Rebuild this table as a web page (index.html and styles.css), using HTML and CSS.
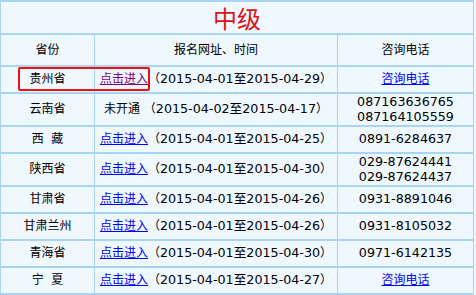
FILE: index.html
```html
<!DOCTYPE html>
<html lang="zh-CN">
<head>
<meta charset="utf-8">
<title>中级</title>
<link rel="stylesheet" href="styles.css">
</head>
<body>
<div class="wrap">
<table class="tbl">
  <colgroup><col class="k1"><col class="k2"><col class="k3"></colgroup>
  <tr class="r-title"><td colspan="3" class="title">中级</td></tr>
  <tr class="r-head"><td>省份</td><td>报名网址、时间</td><td>咨询电话</td></tr>
  <tr class="r1"><td>贵州省</td><td><a class="lk visited">点击进入</a>（<span class="d">2015-04-01至2015-04-29</span>）</td><td><a class="lk">咨询电话</a></td></tr>
  <tr class="r2"><td>云南省</td><td>未开通 （<span class="d">2015-04-02至2015-04-17</span>）</td><td><span class="d">087163636765<br>087164105559</span></td></tr>
  <tr class="r1"><td>西&nbsp;&nbsp;藏</td><td><a class="lk">点击进入</a>（<span class="d">2015-04-01至2015-04-25</span>）</td><td><span class="d">0891-6284637</span></td></tr>
  <tr class="r2"><td>陕西省</td><td><a class="lk">点击进入</a>（<span class="d">2015-04-01至2015-04-30</span>）</td><td><span class="d">029-87624441<br>029-87624437</span></td></tr>
  <tr class="r1"><td>甘肃省</td><td><a class="lk">点击进入</a>（<span class="d">2015-04-01至2015-04-26</span>）</td><td><span class="d">0931-8891046</span></td></tr>
  <tr class="r1"><td>甘肃兰州</td><td><a class="lk">点击进入</a>（<span class="d">2015-04-01至2015-04-26</span>）</td><td><span class="d">0931-8105032</span></td></tr>
  <tr class="r1"><td>青海省</td><td><a class="lk">点击进入</a>（<span class="d">2015-04-01至2015-04-30</span>）</td><td><span class="d">0971-6142135</span></td></tr>
  <tr class="r1"><td>宁&nbsp;&nbsp;夏</td><td><a class="lk">点击进入</a>（<span class="d">2015-04-01至2015-04-27</span>）</td><td><a class="lk">咨询电话</a></td></tr>
</table>
<div class="mark"></div>
</div>
</body>
</html>
```
FILE: styles.css
```css
html, body {
  margin: 0;
  padding: 0;
  background: #eff8ff;
}
body {
  font-family: "DejaVu Sans", "Noto Sans CJK SC", sans-serif;
  font-size: 12px;
  color: #000;
}
.wrap {
  position: relative;
  width: 476px;
  height: 295px;
  overflow: hidden;
}
.tbl {
  border-collapse: separate;
  border-spacing: 0;
  width: 474px;
  table-layout: fixed;
  border-top: 2px solid #a9d4f3;
  border-left: 1px solid #a9d4f3;
  background: #eff8ff;
}
.k1 { width: 94px; }
.k2 { width: 243px; }
.k3 { width: 136px; }
.tbl td {
  padding: 0;
  border-right: 1px solid #a9d4f3;
  border-bottom: 2px solid #a9d4f3;
  text-align: center;
  vertical-align: middle;
  line-height: 14.5px;
  white-space: nowrap;
}
.r-title td { height: 31px; }
.r-head td { height: 30px; }
.r1 td { height: 25px; }
.r2 td { height: 31px; }
.tbl .title {
  font-family: "Noto Sans CJK SC", sans-serif;
  font-size: 24px;
  color: #d91515;
  line-height: 31px;
  letter-spacing: 0;
}
.d {
  font-size: 12.7px;
}
.lk {
  color: #0000ff;
  text-decoration: underline;
  cursor: pointer;
}
.lk.visited {
  color: #800080;
}
.mark {
  position: absolute;
  left: 18px;
  top: 67px;
  width: 128px;
  height: 20px;
  border: 2px solid #ee1111;
  border-radius: 2px;
}
```
